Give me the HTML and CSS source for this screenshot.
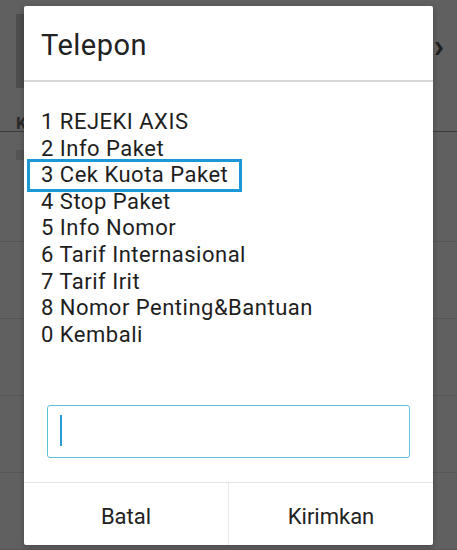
FILE: index.html
```html
<!DOCTYPE html>
<html lang="en">
<head>
    <meta charset="UTF-8" />
    <meta name="viewport" content="width=device-width, initial-scale=1.0" />
    <title>Telepon</title>
    <link rel="stylesheet" href="styles.css">
</head>
<body>
    <!-- dimmed app behind the dialog -->
    <div class="app">
        <div class="app-bar">
            <div class="app-bar-block"></div>
            <span class="chevron">&#x203A;</span>
        </div>
        <div class="app-row row-tall">
            <span class="row-label">K</span>
            <div class="row-chip"></div>
        </div>
        <div class="app-row row-mid"></div>
        <div class="app-row row-mid"></div>
        <div class="app-row row-mid"></div>
        <div class="app-row"></div>
    </div>

    <div class="dialog">
        <div class="dialog-title">Telepon</div>
        <div class="dialog-body">
            <div class="menu">
                <div class="menu-item">1 REJEKI AXIS</div>
                <div class="menu-item">2 Info Paket</div>
                <div class="menu-item"><span class="highlight">3 Cek Kuota Paket</span></div>
                <div class="menu-item">4 Stop Paket</div>
                <div class="menu-item">5 Info Nomor</div>
                <div class="menu-item">6 Tarif Internasional</div>
                <div class="menu-item">7 Tarif Irit</div>
                <div class="menu-item">8 Nomor Penting&amp;Bantuan</div>
                <div class="menu-item">0 Kembali</div>
            </div>
            <div class="input-box">
                <span class="caret"></span>
            </div>
        </div>
        <div class="dialog-actions">
            <button class="action">Batal</button>
            <button class="action">Kirimkan</button>
        </div>
    </div>
</body>
</html>
```

FILE: styles.css
```css
* {
    margin: 0;
    padding: 0;
    box-sizing: border-box;
}

body {
    font-family: Roboto, 'Noto Sans', sans-serif;
    background: #606060;
    width: 457px;
    height: 550px;
    overflow: hidden;
    position: relative;
}

/* App behind the dialog */
.app {
    display: flex;
    flex-direction: column;
    height: 100%;
}

.app-bar {
    height: 132px;
    padding: 14px 0 0 16px;
    display: flex;
    align-items: flex-start;
    justify-content: space-between;
    border-bottom: 1px solid #3c3c3c;
}

.app-bar-block {
    width: 200px;
    height: 74px;
    background: #4e4e4e;
}

.chevron {
    font-size: 34px;
    line-height: 1;
    color: #1f1f1f;
    margin: 14px 13px 0 0;
    font-weight: 700;
}

.app-row {
    flex: 1;
    padding-left: 16px;
    border-bottom: 1px solid #565656;
}

.row-tall {
    flex: none;
    height: 110px;
}

.row-mid {
    flex: none;
    height: 77px;
}

.row-label {
    display: block;
    font-size: 17px;
    font-weight: 700;
    color: #2a2a2a;
    margin-top: -19px;
}

.row-chip {
    width: 60px;
    height: 10px;
    background: #555555;
    margin-top: 17px;
}

/* Dialog */
.dialog {
    position: absolute;
    top: 6px;
    left: 24px;
    width: 409px;
    height: 539px;
    background: #ffffff;
    border-radius: 2px;
    display: flex;
    flex-direction: column;
    box-shadow: 0 2px 6px rgba(0, 0, 0, 0.25);
}

.dialog-title {
    height: 76px;
    padding: 20px 0 0 17px;
    font-size: 29px;
    line-height: 38px;
    letter-spacing: 0.5px;
    color: #222222;
    border-bottom: 2px solid #d6d6d6;
}

.dialog-body {
    flex: 1;
    display: flex;
    flex-direction: column;
}

.menu {
    padding: 27px 0 0 17px;
}

.menu-item {
    font-size: 22px;
    line-height: 26.6px;
    letter-spacing: 0.5px;
    color: #1e1e1e;
}

.highlight {
    display: inline-block;
    padding: 0 11px;
    margin-left: -11px;
    outline: 3px solid #1b99d5;
}

.input-box {
    margin: 57px 23px 0;
    height: 53px;
    border: 1px solid #5fc1d8;
    border-radius: 3px;
    padding: 9px 0 0 12px;
}

.caret {
    display: block;
    width: 2px;
    height: 31px;
    background: #2a9bd4;
}

.dialog-actions {
    height: 63px;
    display: flex;
    border-top: 1px solid #e4e4e4;
}

.action {
    flex: 1;
    background: none;
    border: none;
    font-family: inherit;
    font-size: 22px;
    color: #222222;
    padding-top: 4px;
}

.action + .action {
    border-left: 1px solid #e8e8e8;
}
```
